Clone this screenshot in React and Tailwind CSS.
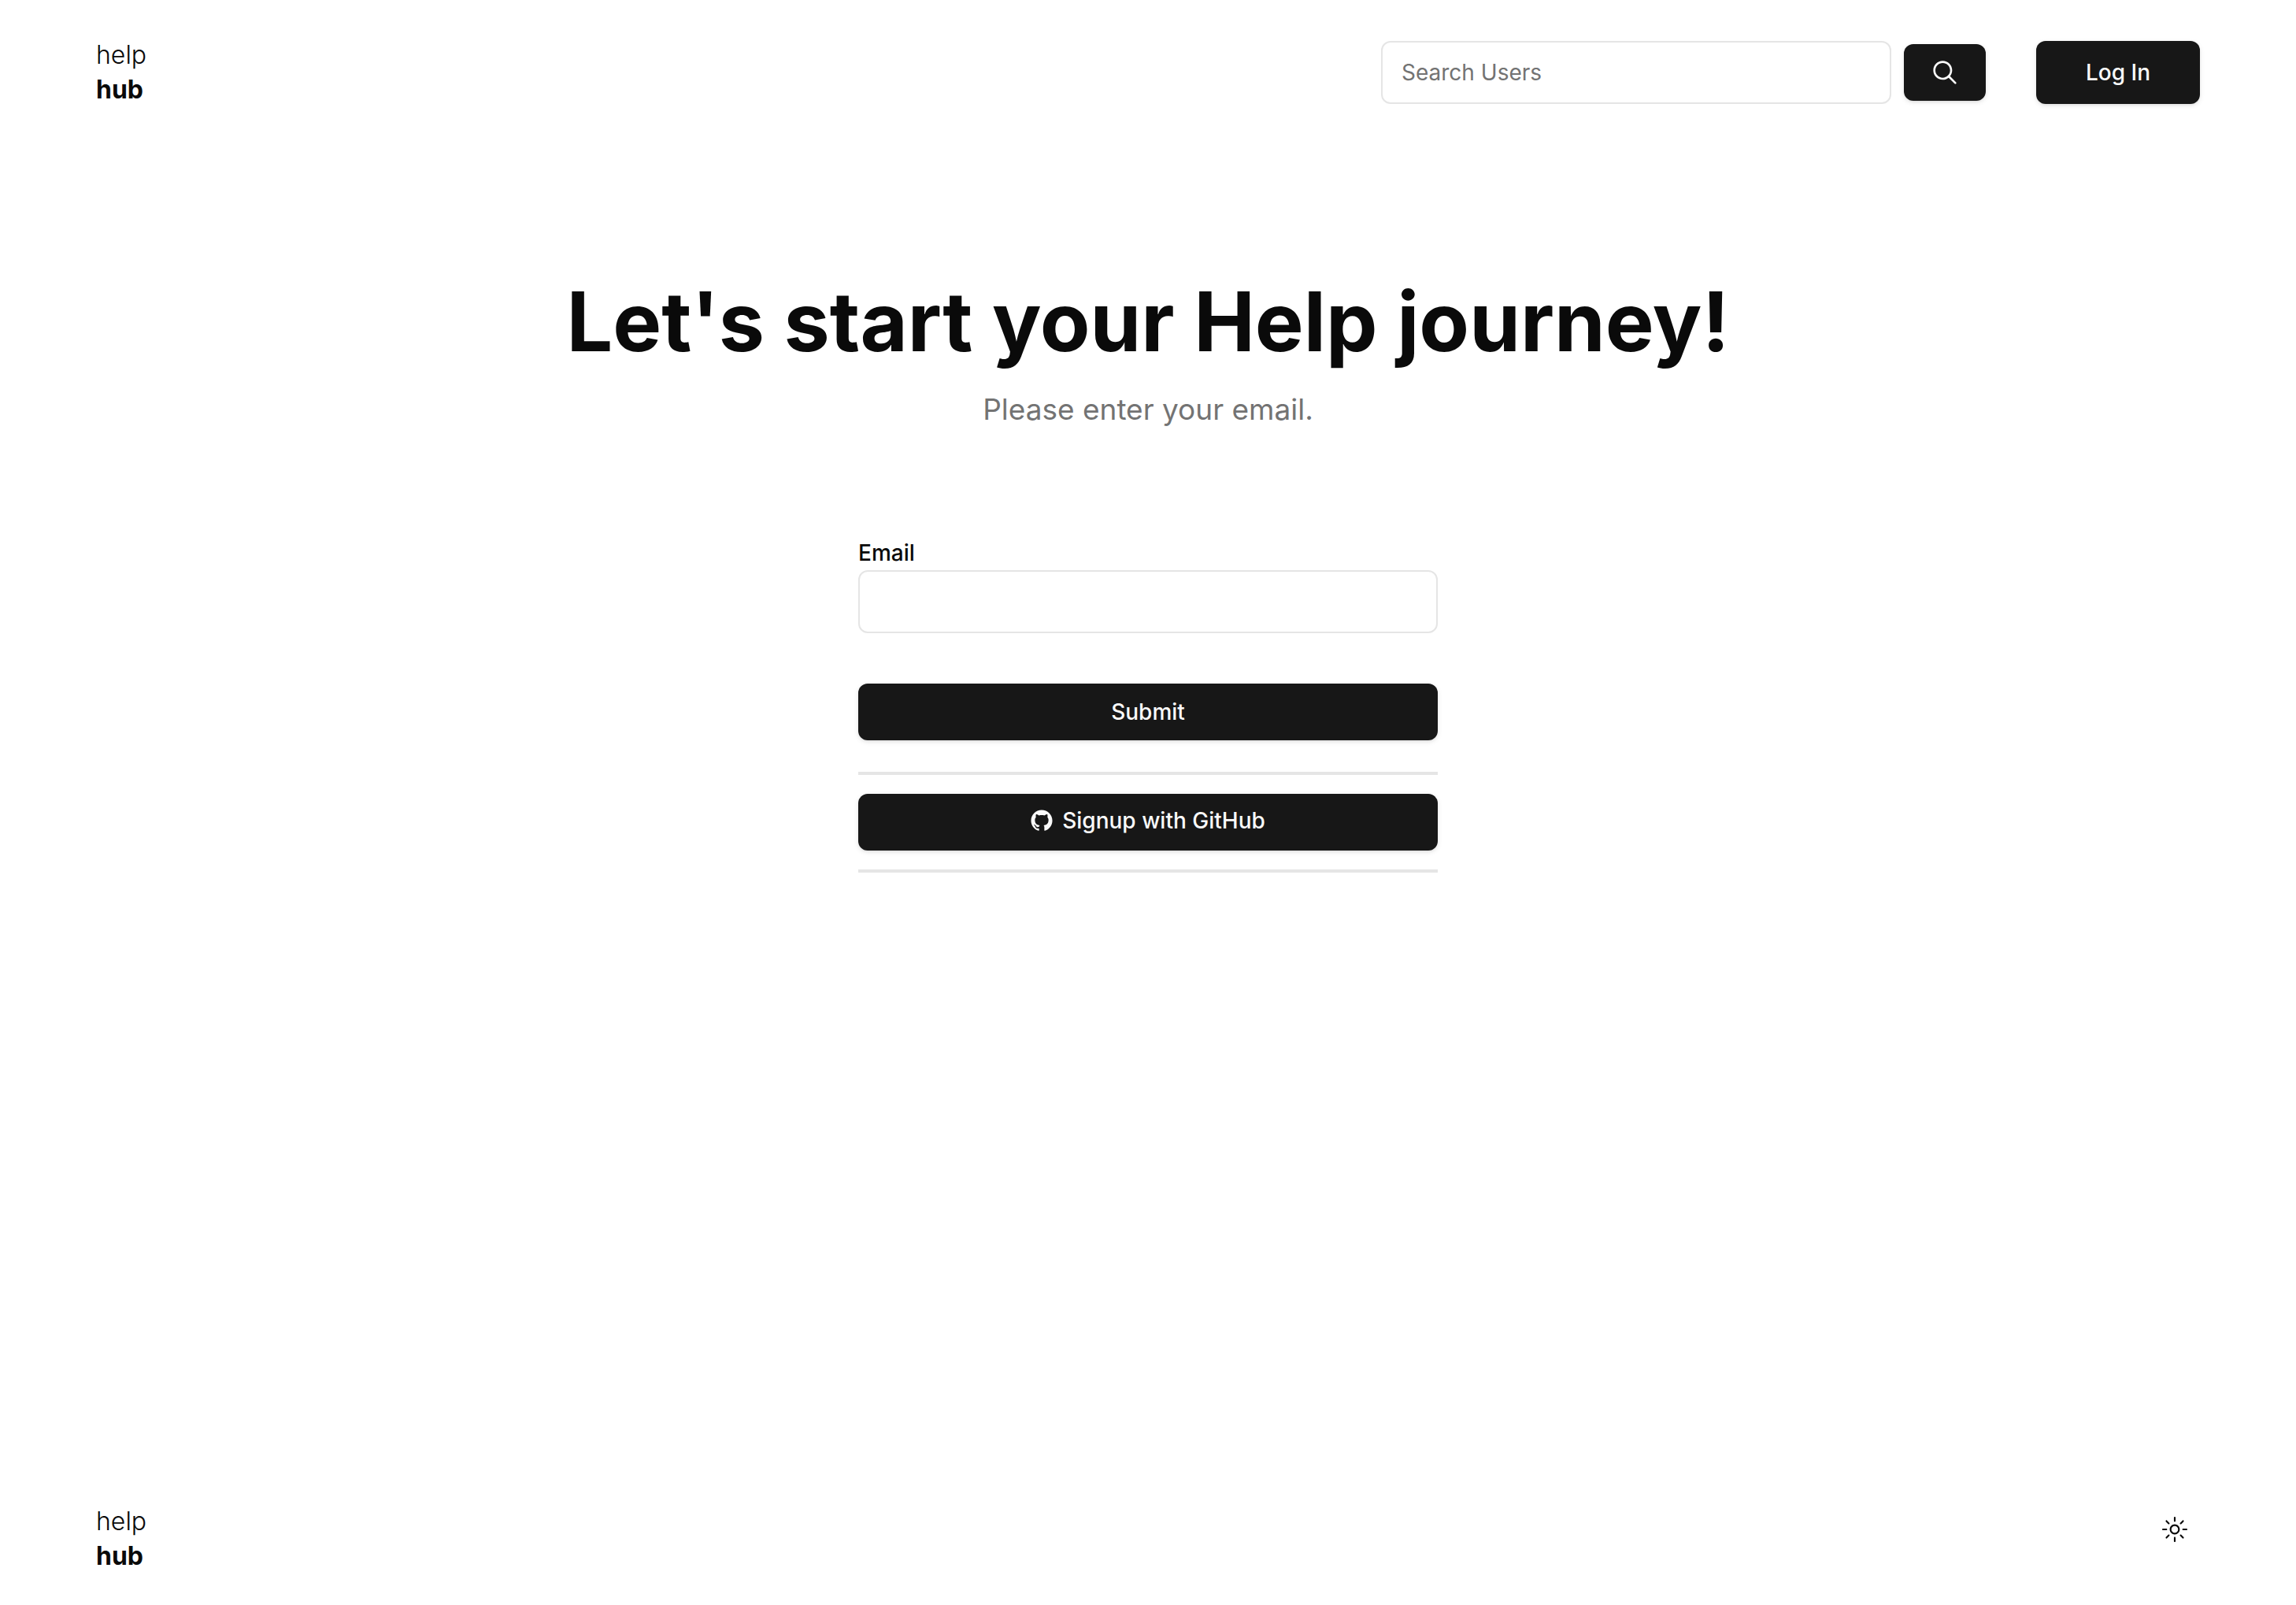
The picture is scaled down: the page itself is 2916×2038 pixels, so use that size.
import React from "react";
import { RxMagnifyingGlass, RxGithubLogo, RxSun } from "react-icons/rx";

const buttonBase =
  "flex items-center justify-center rounded-xl bg-neutral-900 text-[28px] leading-10 font-medium text-neutral-50 shadow-[0_2px_6px_0_rgba(0,0,0,0.1),0_2px_4px_-2px_rgba(0,0,0,0.1)]";
const inputBase =
  "h-20 w-full rounded-xl border-2 border-neutral-200 bg-transparent px-6 text-[28px] leading-10 placeholder:text-neutral-500 outline-none";

function Logo() {
  return (
    <a href="#" className="flex flex-col text-[32px] leading-11">
      <span className="font-light">help</span>
      <span className="font-bold">hub</span>
    </a>
  );
}

function Header() {
  return (
    <header className="flex items-center justify-between px-[122px] pt-12">
      <Logo />
      <div className="flex items-center gap-16">
        <form className="flex items-center gap-4" role="search">
          <div className="w-[648px]">
            <input type="search" aria-label="Search Users" placeholder="Search Users" className={inputBase} />
          </div>
          <button type="button" aria-label="Search" className={`${buttonBase} h-18 w-26`}>
            <RxMagnifyingGlass className="size-10" />
          </button>
        </form>
        <button type="button" className={`${buttonBase} h-20 w-52`}>
          Log In
        </button>
      </div>
    </header>
  );
}

function SignupForm() {
  return (
    <form className="flex w-[736px] flex-col">
      <label htmlFor="email" className="pb-1 text-[28px] leading-9 font-medium">
        Email
      </label>
      <input id="email" type="email" className={inputBase} />
      <button type="button" className={`${buttonBase} mt-16 h-18 w-full`}>
        Submit
      </button>
      <hr className="mt-10 border-t-4 border-neutral-200" />
      <button type="button" className={`${buttonBase} mt-6 h-18 w-full gap-3 pb-1`}>
        <RxGithubLogo className="size-7" />
        Signup with GitHub
      </button>
      <hr className="mt-6 border-t-4 border-neutral-200" />
    </form>
  );
}

export default function App() {
  return (
    <div className="flex min-h-screen flex-col bg-white font-['Inter',sans-serif] text-neutral-950">
      <Header />
      <main className="flex flex-1 flex-col items-center pt-53">
        <h1 className="text-[104px] leading-30 font-bold">Let's start your Help journey!</h1>
        <p className="mt-6 text-[37px] leading-14 text-neutral-500">Please enter your email.</p>
        <div className="mt-34">
          <SignupForm />
        </div>
      </main>
      <footer className="flex items-start justify-between px-[122px] pb-10">
        <Logo />
        <button type="button" aria-label="Toggle theme" className="flex size-16 items-center justify-center">
          <RxSun className="size-8" />
        </button>
      </footer>
    </div>
  );
}
